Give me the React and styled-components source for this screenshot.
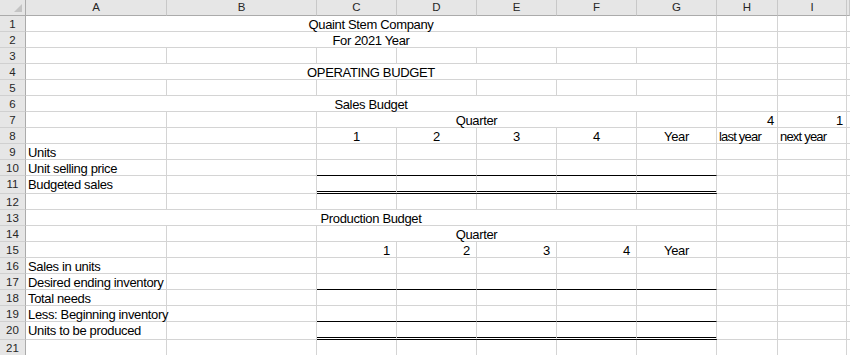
import React from 'react';
import styled, { createGlobalStyle } from 'styled-components';

const GlobalStyle = createGlobalStyle`
  html, body {
    margin: 0;
    padding: 0;
    background: #ffffff;
    overflow: hidden;
  }
  body {
    font-family: "Liberation Sans", Arial, sans-serif;
  }
`;

const COLS = '26px 141px 150px 80px 80px 80px 80px 80px 61px 69px 1fr';
const LETTERS = ['A', 'B', 'C', 'D', 'E', 'F', 'G', 'H', 'I', ''];

const Sheet = styled.div`
  width: 850px;
  height: 355px;
  overflow: hidden;
  background: #ffffff;
`;

const Row = styled.div`
  display: grid;
  grid-template-columns: ${COLS};
  grid-template-rows: ${(p) => p.$h || 16}px;
  height: ${(p) => p.$h || 16}px;
`;

const HeadRow = styled(Row)`
  background: #e6e6e6;
`;

const Corner = styled.div`
  box-sizing: border-box;
  border-right: 1px solid #ababab;
  border-bottom: 1px solid #ababab;
  display: flex;
  align-items: flex-end;
  justify-content: flex-end;
  padding: 0 3px 3px 0;
`;

const ColHead = styled.div`
  box-sizing: border-box;
  border-right: 1px solid #c8c8c8;
  border-bottom: 1px solid #ababab;
  font-size: 11.5px;
  line-height: 15px;
  text-align: center;
  color: #262626;
`;

const RowHead = styled.div`
  box-sizing: border-box;
  min-height: 0;
  background: #e6e6e6;
  border-right: 1px solid #ababab;
  border-bottom: 1px solid #d0d0d0;
  font-size: 11.5px;
  line-height: 15px;
  padding-top: 1px;
  text-align: center;
  color: #262626;
`;

const Cell = styled.div`
  box-sizing: border-box;
  min-height: 0;
  grid-column: span ${(p) => p.$span || 1};
  border-right: 1px solid #d4d4d4;
  border-bottom: ${(p) =>
    p.$rule === 'double'
      ? '3px double #000'
      : p.$rule === 'line'
      ? '1px solid #000'
      : '1px solid #d4d4d4'};
  font-size: 13px;
  line-height: 15px;
  color: #000;
  white-space: nowrap;
  overflow: visible;
  text-align: ${(p) => p.$align || 'left'};
  padding: 1px ${(p) => p.$pr ?? 2}px 0 2px;
  letter-spacing: ${(p) => (p.$tight ? '-0.8px' : '-0.35px')};
`;

const blank = (n = 1) => Array.from({ length: n }, () => ({}));
const ruled = (rule) => Array.from({ length: 5 }, () => ({ rule }));

// columns A..I then the sliver of J
const rows = [
  { n: 1, cells: [{ span: 7, text: 'Quaint Stem Company', align: 'center' }, ...blank(3)] },
  { n: 2, cells: [{ span: 7, text: 'For 2021 Year', align: 'center' }, ...blank(3)] },
  { n: 3, cells: blank(10) },
  { n: 4, cells: [{ span: 7, text: 'OPERATING BUDGET', align: 'center' }, ...blank(3)] },
  { n: 5, cells: blank(10) },
  { n: 6, cells: [{ span: 7, text: 'Sales Budget', align: 'center' }, ...blank(3)] },
  {
    n: 7,
    cells: [
      ...blank(2),
      { span: 4, text: 'Quarter', align: 'center' },
      {},
      { text: '4', align: 'right', pr: 3 },
      { text: '1', align: 'right', pr: 3 },
      {},
    ],
  },
  {
    n: 8,
    cells: [
      ...blank(2),
      { text: '1', align: 'center' },
      { text: '2', align: 'center' },
      { text: '3', align: 'center' },
      { text: '4', align: 'center' },
      { text: 'Year', align: 'center' },
      { text: 'last year', tight: true },
      { text: 'next year', tight: true },
      {},
    ],
  },
  { n: 9, cells: [{ text: 'Units' }, ...blank(9)] },
  { n: 10, cells: [{ text: 'Unit selling price' }, {}, ...ruled('line'), ...blank(3)] },
  { n: 11, h: 18, cells: [{ text: 'Budgeted sales' }, {}, ...ruled('double'), ...blank(3)] },
  { n: 12, cells: blank(10) },
  { n: 13, cells: [{ span: 7, text: 'Production Budget', align: 'center' }, ...blank(3)] },
  { n: 14, cells: [...blank(2), { span: 4, text: 'Quarter', align: 'center' }, ...blank(4)] },
  {
    n: 15,
    cells: [
      ...blank(2),
      { text: '1', align: 'right', pr: 6 },
      { text: '2', align: 'right', pr: 6 },
      { text: '3', align: 'right', pr: 6 },
      { text: '4', align: 'right', pr: 6 },
      { text: 'Year', align: 'center' },
      ...blank(3),
    ],
  },
  { n: 16, cells: [{ text: 'Sales in units' }, ...blank(9)] },
  { n: 17, cells: [{ text: 'Desired ending inventory' }, {}, ...ruled('line'), ...blank(3)] },
  { n: 18, cells: [{ text: 'Total needs' }, ...blank(9)] },
  { n: 19, cells: [{ text: 'Less: Beginning inventory' }, {}, ...ruled('line'), ...blank(3)] },
  { n: 20, h: 18, cells: [{ text: 'Units to be produced' }, {}, ...ruled('double'), ...blank(3)] },
  { n: 21, cells: blank(10) },
];

function App() {
  return (
    <>
      <GlobalStyle />
      <Sheet>
        <HeadRow>
          <Corner>
            <svg width="8" height="8" viewBox="0 0 8 8">
              <polygon points="8,0 8,8 0,8" fill="#c4c4c4" />
            </svg>
          </Corner>
          {LETTERS.map((l, i) => (
            <ColHead key={i}>{l}</ColHead>
          ))}
        </HeadRow>
        {rows.map((r) => (
          <Row key={r.n} $h={r.h}>
            <RowHead>{r.n}</RowHead>
            {r.cells.map((c, i) => (
              <Cell
                key={i}
                $span={c.span}
                $align={c.align}
                $rule={c.rule}
                $pr={c.pr}
                $tight={c.tight}
              >
                {c.text}
              </Cell>
            ))}
          </Row>
        ))}
      </Sheet>
    </>
  );
}

export default App;
